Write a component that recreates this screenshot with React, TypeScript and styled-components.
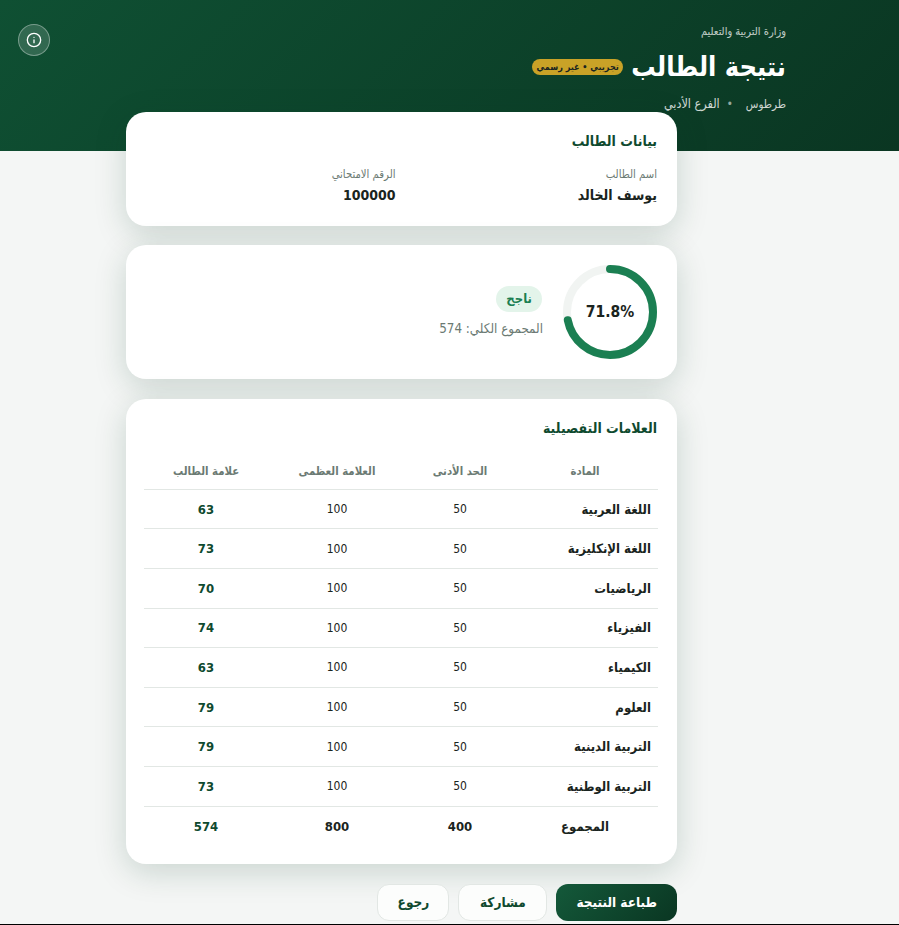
import styled, { createGlobalStyle } from 'styled-components'
import { Info } from 'lucide-react'

const GlobalStyle = createGlobalStyle`
  html, body {
    margin: 0;
    padding: 0;
    height: 100%;
    overflow: hidden;
  }
  body {
    background: #f4f6f5;
    font-family: "DejaVu Sans Condensed", "DejaVu Sans", sans-serif;
    color: #1a2420;
  }
  * { box-sizing: border-box; }
`

const subjects = [
  { name: 'اللغة العربية', mark: 63 },
  { name: 'اللغة الإنكليزية', mark: 73 },
  { name: 'الرياضيات', mark: 70 },
  { name: 'الفيزياء', mark: 74 },
  { name: 'الكيمياء', mark: 63 },
  { name: 'العلوم', mark: 79 },
  { name: 'التربية الدينية', mark: 79 },
  { name: 'التربية الوطنية', mark: 73 },
]

const RING_RADIUS = 43
const RING_LENGTH = 2 * Math.PI * RING_RADIUS

export default function App() {
  return (
    <Page dir="rtl">
      <GlobalStyle />
      <Header>
        <InfoButton aria-label="info">
          <Info size={16} />
        </InfoButton>
        <HeaderInner>
          <Ministry>وزارة التربية والتعليم</Ministry>
          <TitleRow>
            <Title>نتيجة الطالب</Title>
            <Badge>تجريبي • غير رسمي</Badge>
          </TitleRow>
          <Meta>
            <span>طرطوس</span>
            <Dot>•</Dot>
            <Branch>الفرع الأدبي</Branch>
          </Meta>
        </HeaderInner>
      </Header>

      <Main>
        <Card>
          <CardTitle>بيانات الطالب</CardTitle>
          <InfoGrid>
            <div>
              <FieldLabel>اسم الطالب</FieldLabel>
              <FieldValue>يوسف الخالد</FieldValue>
            </div>
            <div>
              <FieldLabel>الرقم الامتحاني</FieldLabel>
              <FieldValue>100000</FieldValue>
            </div>
          </InfoGrid>
        </Card>

        <ResultCard>
          <Ring>
            <svg width="94" height="94" viewBox="0 0 94 94">
              <circle cx="47" cy="47" r={RING_RADIUS} fill="none" stroke="#f1f4f2" strokeWidth="8" />
              <circle
                cx="47"
                cy="47"
                r={RING_RADIUS}
                fill="none"
                stroke="#1b7f52"
                strokeWidth="8"
                strokeLinecap="round"
                strokeDasharray={`${RING_LENGTH * 0.718} ${RING_LENGTH}`}
                transform="rotate(-90 47 47)"
              />
            </svg>
            <RingLabel dir="ltr">71.8%</RingLabel>
          </Ring>
          <ResultText>
            <Status>ناجح</Status>
            <Total>المجموع الكلي: 574</Total>
          </ResultText>
        </ResultCard>

        <TableCard>
          <CardTitle>العلامات التفصيلية</CardTitle>
          <Table>
            <colgroup>
              <col width="146" />
              <col width="104" />
              <col width="142" />
              <col width="122" />
            </colgroup>
            <thead>
              <tr>
                <Th>المادة</Th>
                <Th>الحد الأدنى</Th>
                <Th>العلامة العظمى</Th>
                <Th>علامة الطالب</Th>
              </tr>
            </thead>
            <tbody>
              {subjects.map((s) => (
                <tr key={s.name}>
                  <SubjectCell>{s.name}</SubjectCell>
                  <Td>50</Td>
                  <Td>100</Td>
                  <MarkCell>{s.mark}</MarkCell>
                </tr>
              ))}
              <tr>
                <TotalCell>المجموع</TotalCell>
                <TotalCell>400</TotalCell>
                <TotalCell>800</TotalCell>
                <TotalMark>574</TotalMark>
              </tr>
            </tbody>
          </Table>
        </TableCard>

        <Actions>
          <PrimaryButton>طباعة النتيجة</PrimaryButton>
          <SecondaryButton $width={89}>مشاركة</SecondaryButton>
          <SecondaryButton $width={72}>رجوع</SecondaryButton>
        </Actions>
      </Main>
      <BottomLine />
    </Page>
  )
}

const Page = styled.div`
  position: relative;
  height: 925px;
  overflow: hidden;
`

const Header = styled.header`
  position: relative;
  height: 151px;
  padding: 24px 113px 0 0;
  background: linear-gradient(135deg, #0f5033 0%, #0a3622 100%);
  color: #fff;
`

const InfoButton = styled.button`
  position: absolute;
  top: 24px;
  left: 18px;
  width: 32px;
  height: 32px;
  display: flex;
  align-items: center;
  justify-content: center;
  padding: 0;
  border-radius: 50%;
  border: 1px solid rgba(255, 255, 255, 0.35);
  background: rgba(255, 255, 255, 0.15);
  color: #fff;
`

const HeaderInner = styled.div`
  display: flex;
  flex-direction: column;
`

const Ministry = styled.div`
  font-size: 11px;
  line-height: 16px;
  opacity: 0.75;
`

const TitleRow = styled.div`
  display: flex;
  align-items: center;
  gap: 8px;
  margin-top: 6px;
`

const Title = styled.h1`
  margin: 0;
  font-size: 27px;
  line-height: 42px;
  font-weight: 700;
`

const Badge = styled.span`
  padding: 1px 4.5px;
  border-radius: 8px;
  background: #c9a227;
  color: #1a2420;
  font-size: 9px;
  font-weight: 700;
  line-height: 14px;
`

const Meta = styled.div`
  display: flex;
  align-items: center;
  gap: 8px;
  margin-top: 8px;
  font-size: 11.5px;
  line-height: 16px;
  opacity: 0.8;
`

const Branch = styled.span`
  font-size: 12.5px;
`

const Dot = styled.span`
  margin: 0 5px 0 -1px;
  opacity: 0.7;
`

const Main = styled.main`
  width: 551px;
  margin: -39px 222px 0 0;
  display: flex;
  flex-direction: column;
  gap: 19.6px;
  position: relative;
`

const Card = styled.section`
  background: #fff;
  border-radius: 20px;
  padding: 20px;
  box-shadow: 0 8px 32px rgba(13, 61, 38, 0.18);
  height: 113.6px;
`

const CardTitle = styled.h2`
  margin: 0;
  font-size: 14px;
  line-height: 18px;
  font-weight: 700;
  color: #0f4a2f;
`

const InfoGrid = styled.div`
  display: grid;
  grid-template-columns: 1fr 1fr;
  gap: 12px;
  margin-top: 18px;
`

const FieldLabel = styled.div`
  font-size: 11.2px;
  line-height: 14px;
  color: #6b7a73;
`

const FieldValue = styled.div`
  margin-top: 3px;
  font-size: 14px;
  line-height: 20px;
  font-weight: 700;
  color: #1a2420;
`

const ResultCard = styled(Card)`
  height: 134px;
  display: flex;
  align-items: center;
  gap: 20px;
`

const Ring = styled.div`
  position: relative;
  width: 94px;
  height: 94px;
  flex: none;
`

const RingLabel = styled.div`
  position: absolute;
  inset: 0;
  display: flex;
  align-items: center;
  justify-content: center;
  font-size: 15.5px;
  font-weight: 700;
`

const ResultText = styled.div`
  display: flex;
  flex-direction: column;
  align-items: flex-start;
  gap: 8px;
`

const Status = styled.span`
  margin-right: 1px;
  padding: 4px 10px;
  border-radius: 13px;
  background: #e3f4ea;
  color: #1b7f52;
  font-size: 13px;
  line-height: 18px;
  font-weight: 700;
`

const Total = styled.div`
  font-size: 13.3px;
  line-height: 18px;
  color: #6b7a73;
`

const TableCard = styled(Card)`
  height: 465.4px;
`

const Table = styled.table`
  width: 514px;
  margin: 11.5px -1px 0 0;
  border-collapse: collapse;
  table-layout: fixed;
  font-size: 12px;
`

const Th = styled.th`
  height: 41px;
  padding: 5px 0 0 0;
  text-align: center;
  font-size: 11.3px;
  font-weight: 700;
  color: #6b7a73;
  border-bottom: 1px solid #e2e7e4;

  &:last-child {
    padding-left: 2px;
  }
`

const Td = styled.td`
  height: 39.6px;
  padding: 0;
  text-align: center;
  border-bottom: 1px solid #e2e7e4;
`

const SubjectCell = styled(Td)`
  padding-right: 7px;
  text-align: right;
  font-size: 13px;
  font-weight: 700;
`

const MarkCell = styled(Td)`
  padding-left: 2px;
  font-size: 13px;
  font-weight: 700;
  color: #0f4a2f;
`

const TotalCell = styled(Td)`
  font-size: 13px;
  font-weight: 700;
  border-bottom: none;
`

const TotalMark = styled(TotalCell)`
  padding-left: 2px;
  color: #0f4a2f;
`

const Actions = styled.div`
  display: flex;
  gap: 9px;
`

const PrimaryButton = styled.button`
  height: 37px;
  padding: 0 20px;
  border: none;
  border-radius: 12px;
  background: linear-gradient(135deg, #14593a 0%, #0a3622 100%);
  color: #fff;
  font-family: inherit;
  font-size: 13.5px;
  font-weight: 700;
`

const SecondaryButton = styled.button<{ $width: number }>`
  width: ${(props) => props.$width}px;
  height: 37px;
  padding: 0;
  border: 1px solid #e2e7e4;
  border-radius: 12px;
  background: #fcfdfc;
  color: #0f4a2f;
  font-family: inherit;
  font-size: 13.5px;
  font-weight: 700;
`

const BottomLine = styled.div`
  position: absolute;
  left: 0;
  right: 0;
  bottom: 0;
  height: 1px;
  background: #000;
`
